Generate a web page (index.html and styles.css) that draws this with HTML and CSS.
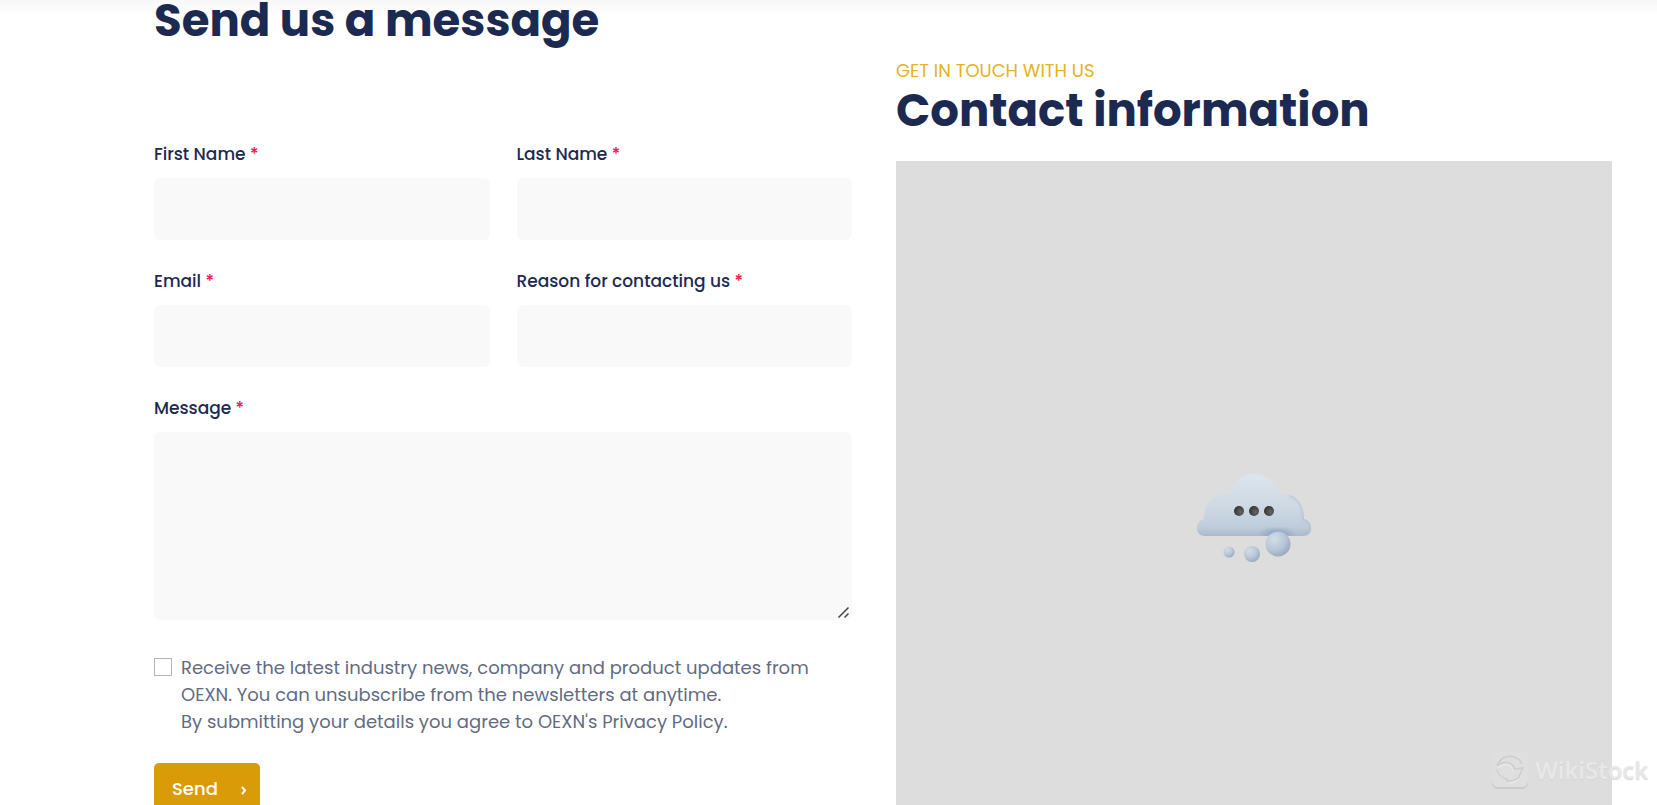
FILE: index.html
```html
<!DOCTYPE html>
<html lang="en">

<head>
    <meta charset="utf-8" />
    <meta name="viewport" content="width=device-width, initial-scale=1" />
    <title>Contact us</title>
    <link rel="stylesheet" href="styles.css">
</head>

<body>
    <main class="contact">
        <section class="message">
            <h2 class="title">Send us a message</h2>
            <form class="form">
                <div class="field">
                    <label for="firstName">First Name <span class="required">*</span></label>
                    <input type="text" class="form-control" id="firstName" required />
                </div>
                <div class="field">
                    <label for="lastName">Last Name <span class="required">*</span></label>
                    <input type="text" class="form-control" id="lastName" required />
                </div>
                <div class="field">
                    <label for="email">Email <span class="required">*</span></label>
                    <input type="email" class="form-control" id="email" required />
                </div>
                <div class="field">
                    <label for="reason">Reason for contacting us <span class="required">*</span></label>
                    <input type="text" class="form-control" id="reason" required />
                </div>
                <div class="field field-wide">
                    <label for="message">Message <span class="required">*</span></label>
                    <textarea class="form-control" id="message" required></textarea>
                </div>
                <div class="consent field-wide">
                    <input type="checkbox" id="newsletter" />
                    <label for="newsletter">Receive the latest industry news, company and product updates from OEXN. You can unsubscribe from the newsletters at anytime.<br>By submitting your details you agree to OEXN's Privacy Policy.</label>
                </div>
                <button type="submit" class="btn-send">
                    Send
                    <svg width="8" height="12" viewBox="0 0 8 12" aria-hidden="true">
                        <path d="M2 4 5 7.500 2 11" fill="none" stroke="#fff" stroke-width="2" />
                    </svg>
                </button>
            </form>
        </section>

        <section class="info">
            <p class="subtitle">GET IN TOUCH WITH US</p>
            <h2 class="title">Contact information</h2>
            <div class="map">
                <svg width="116" height="92" viewBox="0 0 116 92" aria-hidden="true">
                    <defs>
                        <linearGradient id="cloud" x1="0" y1="0" x2="0" y2="1">
                            <stop offset="0" stop-color="#dde5ed" />
                            <stop offset=".55" stop-color="#cdd8e3" />
                            <stop offset=".85" stop-color="#bfccdb" />
                            <stop offset="1" stop-color="#abbbce" />
                        </linearGradient>
                        <radialGradient id="drop" cx=".35" cy=".3" r=".75">
                            <stop offset="0" stop-color="#d3dde8" />
                            <stop offset=".6" stop-color="#b7c5d6" />
                            <stop offset="1" stop-color="#95a8c0" />
                        </radialGradient>
                        <radialGradient id="dot" cx=".65" cy=".6" r=".65">
                            <stop offset="0" stop-color="#666" />
                            <stop offset="1" stop-color="#333" />
                        </radialGradient>
                        <radialGradient id="shade">
                            <stop offset="0" stop-color="#6f89aa" stop-opacity=".8" />
                            <stop offset="1" stop-color="#8fa5c0" stop-opacity="0" />
                        </radialGradient>
                        <filter id="soft" x="-50%" y="-50%" width="200%" height="200%">
                            <feGaussianBlur stdDeviation="1.5" />
                        </filter>
                        <filter id="edge" x="-10%" y="-10%" width="120%" height="120%">
                            <feGaussianBlur stdDeviation=".5" />
                        </filter>
                        <clipPath id="outline">
                            <path d="M9 63C3 63 1 59 1 55C1 50 4 47 8 46C8 32 16 22 27 21Q31 20 34 21C37 9 46 1 58 1C71 1 80 10 83 21Q88 20 94 22C103 25 108 34 108 46C112 47 115 50 115 55C115 60 112 63 107 63Z" />
                        </clipPath>
                    </defs>
                    <path d="M9 63C3 63 1 59 1 55C1 50 4 47 8 46C8 32 16 22 27 21Q31 20 34 21C37 9 46 1 58 1C71 1 80 10 83 21Q88 20 94 22C103 25 108 34 108 46C112 47 115 50 115 55C115 60 112 63 107 63Z" fill="url(#cloud)" filter="url(#edge)" />
                    <g clip-path="url(#outline)">
                        <path d="M94 22C103 25 108 34 108 46C112 47 115 50 115 55C115 60 112 63 107 63H9" fill="none" stroke="#a9bace" stroke-width="2" filter="url(#soft)" />
                        <ellipse cx="81" cy="61" rx="20" ry="8" fill="url(#shade)" />
                    </g>
                    <g fill="url(#dot)">
                        <circle cx="43" cy="38" r="5" />
                        <circle cx="58" cy="38" r="5" />
                        <circle cx="73" cy="38" r="5" />
                    </g>
                    <g fill="url(#drop)">
                        <circle cx="82" cy="71" r="12.5" />
                        <circle cx="56" cy="81" r="8" />
                        <circle cx="33" cy="79" r="5.5" />
                    </g>
                </svg>
            </div>
        </section>
    </main>

    <div class="watermark">
        <svg width="36" height="38" viewBox="0 0 36 38" aria-hidden="true">
            <rect y="2" width="36" height="36" rx="6" fill="#cbcbcb" />
            <rect width="36" height="36" rx="6" fill="#dfdfdf" />
            <path d="M5 14C9 6 16 4 22 6Q28 8 30 13M5 15C12 9 20 11 23 18L31 17L26 27Q22 30 15 30V27" fill="none" stroke="#cdcdcd" stroke-width="1.5" />
            <path d="M5 18C5 23 9 26 14 28" fill="none" stroke="#d1d1d1" stroke-width="1.5" />
            <path d="M6 17C13 11 19 13 21 20M16 32Q23 32 27 28" fill="none" stroke="#e8e8e8" stroke-width="1.5" />
        </svg>
        <span>WikiStock</span>
    </div>
</body>

</html>
```

FILE: styles.css
```css
* {
    box-sizing: border-box;
}

body {
    height: 100vh;
    margin: 0;
    overflow: hidden;
    position: relative;
    font-family: Poppins, Inter, sans-serif;
    color: #1c2951;
    background: linear-gradient(#f7f7f7, #fff 16px);
}

.contact {
    display: grid;
    grid-template-columns: 698fr 716fr;
    column-gap: 44px;
    padding: 0 45px 0 154px;
}

.title {
    margin: 0;
    font-size: 45px;
    line-height: 42px;
    font-weight: 700;
    white-space: nowrap;
}

.form {
    display: grid;
    grid-template-columns: 1fr 1fr;
    column-gap: 27px;
    row-gap: 28px;
    margin-top: 99px;
}

.field {
    display: flex;
    flex-direction: column;
    gap: 11px;
}

.field-wide {
    grid-column: 1 / -1;
}

.field label {
    font-size: 17px;
    line-height: 26px;
    font-weight: 500;
}

.required {
    color: #ff1053;
}

.form-control {
    width: 100%;
    height: 62px;
    padding: 12px 20px;
    border: 0;
    border-radius: 6px;
    background-color: #f9f9f9;
    font: inherit;
}

textarea.form-control {
    height: 188px;
    resize: vertical;
}

textarea::-webkit-resizer {
    background: url("data:image/svg+xml,%3Csvg xmlns='http://www.w3.org/2000/svg' width='15' height='15'%3E%3Cpath d='M1.5 12.5 11.5 2.5M7.5 12.5 11.5 8.5' stroke='%23444' stroke-width='1.5'/%3E%3C/svg%3E") no-repeat;
}

.consent {
    display: flex;
    gap: 9px;
    margin-top: 6px;
    font-size: 18px;
    line-height: 27px;
    color: #626b83;
}

.consent input {
    flex: none;
    appearance: none;
    width: 18px;
    height: 18px;
    margin: 4px 0 0;
    border: 1px solid #b5b5b5;
    background-color: #fff;
}

.btn-send {
    display: flex;
    align-items: center;
    justify-content: space-between;
    width: 106px;
    height: 51px;
    padding: 0 12px 0 18px;
    border: 0;
    border-radius: 5px;
    background-color: #d99b08;
    color: #fff;
    font: 500 18px/27px Poppins, Inter, sans-serif;
}

.info {
    padding-top: 57px;
}

.subtitle {
    margin: 0;
    font-size: 18px;
    line-height: 27px;
    color: #e5b222;
}

.info .title {
    margin: 6px 0 29px;
}

.map {
    display: flex;
    align-items: center;
    justify-content: center;
    height: 716px;
    background-color: #ddd;
}

.watermark {
    position: absolute;
    right: 9px;
    bottom: 15px;
    display: flex;
    align-items: center;
    gap: 7px;
    font: 600 24px/40px "Open Sans", sans-serif;
    color: #e8e8e8;
    text-shadow: 0 1px 1px #d4d4d4;
}
```
